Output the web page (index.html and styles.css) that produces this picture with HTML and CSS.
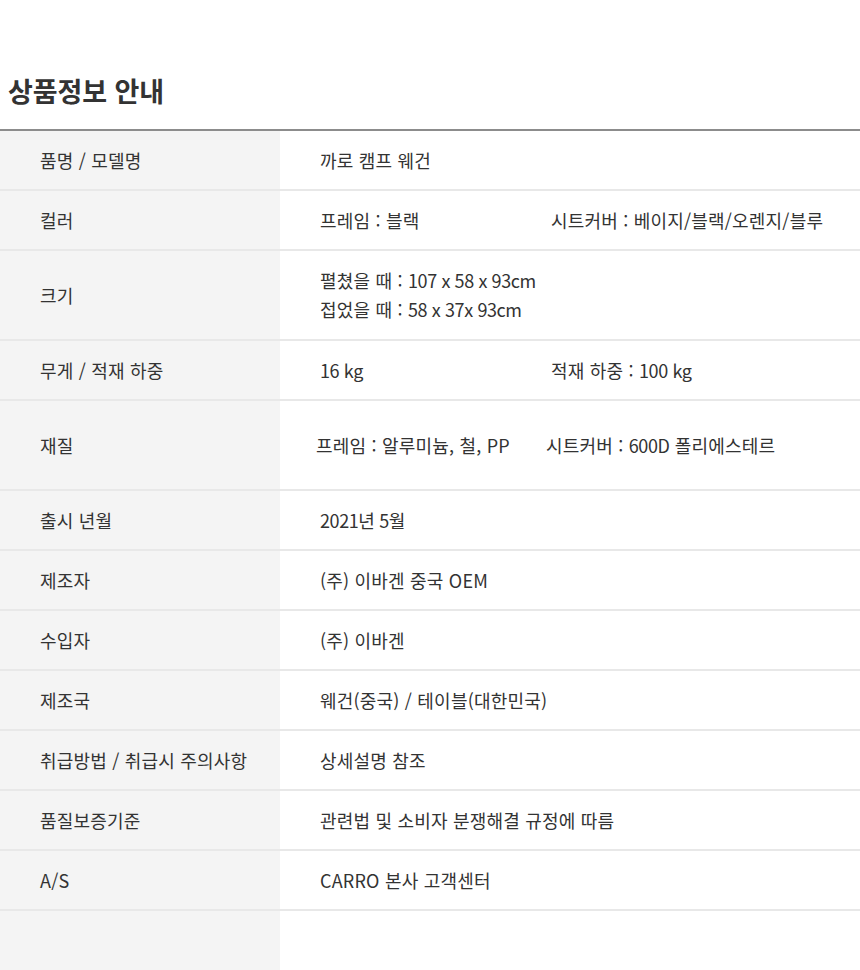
FILE: index.html
```html
<!DOCTYPE html>
<html lang="ko">
<head>
<meta charset="utf-8">
<link rel="stylesheet" href="styles.css">
</head>
<body>
<div class="page">
  <h2 class="title">상품정보 안내</h2>
  <div class="table">
    <div class="row"><div class="th">품명 / 모델명</div><div class="td">까로 캠프 웨건</div></div>
    <div class="row"><div class="th">컬러</div><div class="td"><span class="c1">프레임 : 블랙</span><span>시트커버 : 베이지/블랙/오렌지/블루</span></div></div>
    <div class="row tall"><div class="th">크기</div><div class="td stack"><span>펼쳤을 때 : <span class="num">107 x 58 x 93cm</span></span><span>접었을 때 : <span class="num">58 x 37x 93cm</span></span></div></div>
    <div class="row"><div class="th">무게 / 적재 하중</div><div class="td"><span class="c1 num">16 kg</span><span>적재 하중 : <span class="num">100 kg</span></span></div></div>
    <div class="row tall"><div class="th">재질</div><div class="td shift"><span class="c1">프레임 : 알루미늄, 철, PP</span><span>시트커버 : <span class="num">600D</span> 폴리에스테르</span></div></div>
    <div class="row"><div class="th">출시 년월</div><div class="td"><span class="num">2021년 5월</span></div></div>
    <div class="row"><div class="th">제조자</div><div class="td">(주) 이바겐 중국 OEM</div></div>
    <div class="row"><div class="th">수입자</div><div class="td">(주) 이바겐</div></div>
    <div class="row"><div class="th">제조국</div><div class="td">웨건(중국) / 테이블(대한민국)</div></div>
    <div class="row"><div class="th">취급방법 / 취급시 주의사항</div><div class="td">상세설명 참조</div></div>
    <div class="row"><div class="th">품질보증기준</div><div class="td">관련법 및 소비자 분쟁해결 규정에 따름</div></div>
    <div class="row"><div class="th">A/S</div><div class="td">CARRO 본사 고객센터</div></div>
    <div class="filler"></div>
  </div>
</div>
</body>
</html>
```
FILE: styles.css
```css
html, body {
  margin: 0;
  padding: 0;
  background: #fff;
}
.page {
  width: 860px;
  font-family: "Noto Sans CJK KR", "Noto Sans", sans-serif;
  color: #333;
}
.title {
  margin: 0;
  padding: 71px 0 0 8px;
  height: 129px;
  box-sizing: border-box;
  font-size: 27px;
  line-height: 40px;
  font-weight: 700;
  letter-spacing: -0.1px;
  color: #333;
}
.table {
  border-top: 2px solid #8c8c8c;
  background: linear-gradient(to right, #f4f4f4 280px, #fff 280px);
}
.row {
  display: flex;
  min-height: 58px;
  border-bottom: 2px solid #e8e8e8;
  font-size: 18px;
  line-height: 29px;
  letter-spacing: 0.2px;
}
.row.tall {
  min-height: 88px;
}
.th {
  width: 280px;
  box-sizing: border-box;
  padding-left: 40px;
  display: flex;
  align-items: center;
}
.td {
  flex: 1;
  padding-left: 40px;
  display: flex;
  align-items: center;
}
.td.stack {
  flex-direction: column;
  align-items: flex-start;
  justify-content: center;
}
.td.shift {
  padding-left: 36px;
}
.c1 {
  width: 231px;
  flex: none;
}
.td.shift .c1 {
  width: 230px;
}
.num {
  letter-spacing: -0.4px;
}
.filler {
  height: 59px;
}
```
